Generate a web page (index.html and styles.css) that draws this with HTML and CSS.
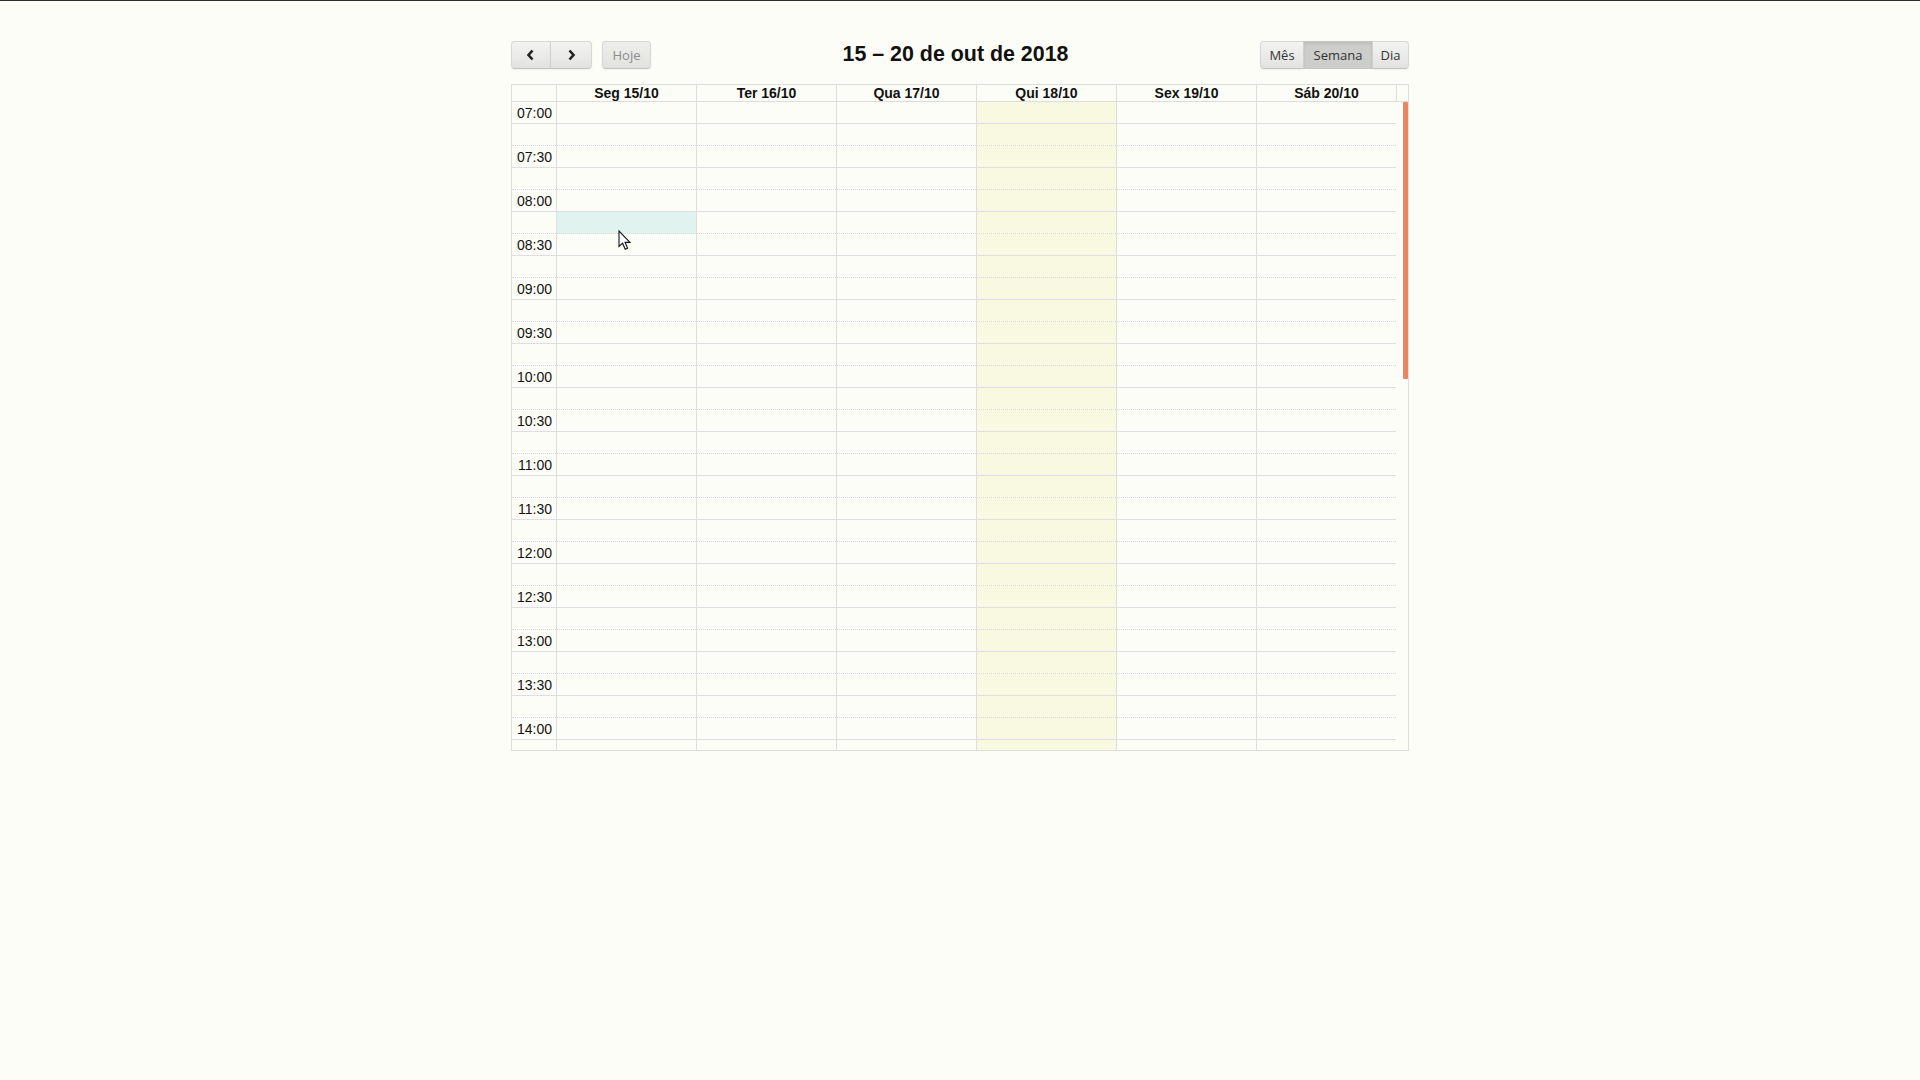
FILE: index.html
```html
<!DOCTYPE html>
<html lang="pt-BR">
<head>
<meta charset="utf-8">
<title>Calendário</title>
<link rel="stylesheet" href="styles.css">
</head>
<body>
<div class="calendar">
  <div class="toolbar">
    <div class="tb-left">
      <div class="btn-group">
        <button class="btn btn-prev" aria-label="anterior"><svg width="10" height="12" viewBox="0 0 10 12"><polyline points="6.5,1.5 2.5,6 6.5,10.5" fill="none" stroke="#222" stroke-width="2.6" stroke-linejoin="miter"/></svg></button>
        <button class="btn btn-next" aria-label="próximo"><svg width="10" height="12" viewBox="0 0 10 12"><polyline points="3.5,1.5 7.5,6 3.5,10.5" fill="none" stroke="#222" stroke-width="2.6" stroke-linejoin="miter"/></svg></button>
      </div>
      <button class="btn btn-single btn-disabled">Hoje</button>
    </div>
    <div class="tb-center"><h2 class="title">15 – 20 de out de 2018</h2></div>
    <div class="tb-right">
      <div class="btn-group">
        <button class="btn btn-mes">Mês</button>
        <button class="btn btn-semana btn-active">Semana</button>
        <button class="btn btn-dia">Dia</button>
      </div>
    </div>
  </div>

  <div class="view">
    <div class="head">
      <div class="hcell axis"></div>
      <div class="hcell day">Seg 15/10</div>
      <div class="hcell day">Ter 16/10</div>
      <div class="hcell day">Qua 17/10</div>
      <div class="hcell day">Qui 18/10</div>
      <div class="hcell day">Sex 19/10</div>
      <div class="hcell day">Sáb 20/10</div>
      <div class="hcell gutter"></div>
    </div>
    <div class="body">
      <div class="grid">
        <div class="col c1"></div>
        <div class="col c2"></div>
        <div class="col c3"></div>
        <div class="col c4 today"></div>
        <div class="col c5"></div>
        <div class="col c6"></div>
        <div class="highlight"></div>

        <div class="slats">
          <div class="slat"><span class="lbl">07:00</span></div>
          <div class="slat minor"><span class="lbl"></span></div>
          <div class="slat"><span class="lbl">07:30</span></div>
          <div class="slat minor"><span class="lbl"></span></div>
          <div class="slat"><span class="lbl">08:00</span></div>
          <div class="slat minor"><span class="lbl"></span></div>
          <div class="slat"><span class="lbl">08:30</span></div>
          <div class="slat minor"><span class="lbl"></span></div>
          <div class="slat"><span class="lbl">09:00</span></div>
          <div class="slat minor"><span class="lbl"></span></div>
          <div class="slat"><span class="lbl">09:30</span></div>
          <div class="slat minor"><span class="lbl"></span></div>
          <div class="slat"><span class="lbl">10:00</span></div>
          <div class="slat minor"><span class="lbl"></span></div>
          <div class="slat"><span class="lbl">10:30</span></div>
          <div class="slat minor"><span class="lbl"></span></div>
          <div class="slat"><span class="lbl">11:00</span></div>
          <div class="slat minor"><span class="lbl"></span></div>
          <div class="slat"><span class="lbl">11:30</span></div>
          <div class="slat minor"><span class="lbl"></span></div>
          <div class="slat"><span class="lbl">12:00</span></div>
          <div class="slat minor"><span class="lbl"></span></div>
          <div class="slat"><span class="lbl">12:30</span></div>
          <div class="slat minor"><span class="lbl"></span></div>
          <div class="slat"><span class="lbl">13:00</span></div>
          <div class="slat minor"><span class="lbl"></span></div>
          <div class="slat"><span class="lbl">13:30</span></div>
          <div class="slat minor"><span class="lbl"></span></div>
          <div class="slat"><span class="lbl">14:00</span></div>
          <div class="slat minor"><span class="lbl"></span></div>
        </div>

        <div class="scroll-gutter"><div class="thumb"></div></div>

        <svg class="cursor" width="14" height="21" viewBox="0 0 14 21"><path d="M1 1 L1 16.5 L4.6 13.2 L7.2 19.2 L9.6 18.2 L7.1 12.4 L12 12.4 Z" fill="#fff" stroke="#111" stroke-width="1.1" stroke-linejoin="miter"/></svg>
      </div>
    </div>
  </div>
</div>
</body>
</html>
```
FILE: styles.css
```css
* { box-sizing: border-box; }

html, body {
  margin: 0;
  padding: 0;
}

body {
  background: #fdfdf7;
  border-top: 1px solid #2a2a2a;
  min-height: 1080px;
  font-family: "Liberation Sans", Arial, sans-serif;
  color: #111;
}

.calendar {
  width: 898px;
  margin: 40px auto 0;
}

/* toolbar */
.toolbar {
  display: flex;
  align-items: center;
  height: 28px;
  margin-bottom: 15px;
}

.tb-left {
  display: flex;
  align-items: center;
  gap: 10px;
}

.tb-center {
  flex: 1;
  text-align: center;
}

.title {
  margin: 0;
  font-size: 21.4px;
  font-weight: bold;
  line-height: 24px;
  padding-bottom: 3px;
  color: #111;
}

.tb-right {
  display: flex;
}

.btn-group {
  display: flex;
}

.btn {
  height: 28px;
  margin: 0;
  padding: 0;
  font-family: "Open Sans", "DejaVu Sans", sans-serif;
  font-size: 13px;
  color: #333;
  background: linear-gradient(#f3f3f1, #e2e2e0);
  border: 1px solid #d6d6d6;
  border-bottom-color: #c2c2c2;
  box-shadow: 0 1px 2px rgba(0, 0, 0, 0.05);
  display: flex;
  align-items: center;
  justify-content: center;
  cursor: pointer;
}

.btn-group .btn + .btn {
  border-left: 1px solid #d0d0d0;
  margin-left: -1px;
}

.btn-group .btn:first-child {
  border-radius: 4px 0 0 4px;
}

.btn-group .btn:last-child {
  border-radius: 0 4px 4px 0;
}

.btn-single {
  border-radius: 4px;
}

.btn-prev { width: 40px; }
.btn-next { width: 42px; }
.btn-disabled {
  width: 49px;
  color: #8a8a8a;
  background: linear-gradient(#eeeeeb, #e2e2df);
}

.btn-mes { width: 44px; }
.btn-semana { width: 70px; }
.btn-dia { width: 37px; }

.btn-active {
  background: #cdcdcb;
  box-shadow: inset 0 2px 3px rgba(0, 0, 0, 0.08);
  border-color: #c6c6c6;
}

/* view */
.view {
  border: 1px solid #ddd;
}

.head {
  display: grid;
  grid-template-columns: 44px repeat(6, 140px) 12px;
  border-bottom: 1px solid #ddd;
}

.hcell {
  height: 16px;
  line-height: 16px;
  font-size: 14px;
  font-weight: bold;
  text-align: center;
  color: #111;
}

.hcell.day,
.hcell.gutter {
  border-left: 1px solid #ddd;
}

.body {
  height: 648px;
  overflow: hidden;
}

.grid {
  position: relative;
  display: grid;
  grid-template-columns: 44px repeat(6, 140px) 12px;
  grid-template-rows: repeat(30, 22px);
}

.col {
  grid-row: 1 / -1;
  border-left: 1px solid #ddd;
}

.c1 { grid-column: 2; }
.c2 { grid-column: 3; }
.c3 { grid-column: 4; }
.c4 { grid-column: 5; }
.c5 { grid-column: 6; }
.c6 { grid-column: 7; }

.today {
  background: #f9f9e2;
}

.highlight {
  grid-column: 2;
  grid-row: 6;
  margin-left: 1px;
  background: #e1f3ee;
}

.slats {
  grid-column: 1 / 8;
  grid-row: 1 / -1;
  display: flex;
  flex-direction: column;
}

.slat {
  height: 22px;
  flex: none;
  display: flex;
  border-bottom: 1px solid #dedde8;
}

.slat.minor {
  border-bottom: 1px dotted #d8d8e2;
}

.lbl {
  width: 44px;
  padding: 3px 4px 0 0;
  text-align: right;
  font-size: 14px;
  line-height: 16px;
  color: #111;
}

.scroll-gutter {
  grid-column: 8;
  grid-row: 1 / -1;
  display: flex;
  justify-content: flex-end;
  align-items: flex-start;
}

.thumb {
  width: 5px;
  height: 277px;
  background: #e8875f;
  border-radius: 1px;
}

.cursor {
  position: absolute;
  left: 106px;
  top: 128px;
}
```
